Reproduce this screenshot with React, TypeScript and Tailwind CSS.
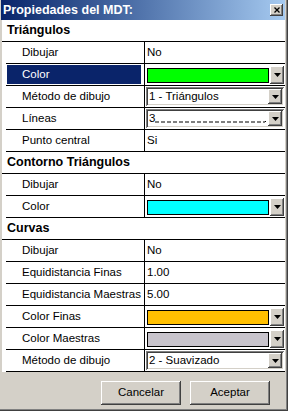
import React from "react";

type Row =
  | { kind: "header"; label: string }
  | { kind: "text"; label: string; value: string; selected?: boolean }
  | { kind: "color"; label: string; color: string; selected?: boolean }
  | { kind: "combo"; label: string; value: string }
  | { kind: "lines"; label: string };

const rows: Row[] = [
  { kind: "header", label: "Triángulos" },
  { kind: "text", label: "Dibujar", value: "No" },
  { kind: "color", label: "Color", color: "#00ff00", selected: true },
  { kind: "combo", label: "Método de dibujo", value: "1 - Triángulos" },
  { kind: "lines", label: "Líneas" },
  { kind: "text", label: "Punto central", value: "Si" },
  { kind: "header", label: "Contorno Triángulos" },
  { kind: "text", label: "Dibujar", value: "No" },
  { kind: "color", label: "Color", color: "#00ffff" },
  { kind: "header", label: "Curvas" },
  { kind: "text", label: "Dibujar", value: "No" },
  { kind: "text", label: "Equidistancia Finas", value: "1.00" },
  { kind: "text", label: "Equidistancia Maestras", value: "5.00" },
  { kind: "color", label: "Color Finas", color: "#ffbf00" },
  { kind: "color", label: "Color Maestras", color: "#c8c4cc" },
  { kind: "combo", label: "Método de dibujo", value: "2 - Suavizado" },
];

function Arrow() {
  return (
    <svg width="7" height="4" viewBox="0 0 7 4">
      <polygon points="0,0 7,0 3.5,4" fill="#000" />
    </svg>
  );
}

function DropButton() {
  return (
    <div className="flex h-full w-[14px] shrink-0 items-center justify-center bg-[#d4d0c8] shadow-[inset_-1px_-1px_0_#404040,inset_1px_1px_0_#ffffff,inset_-2px_-2px_0_#808080]">
      <Arrow />
    </div>
  );
}

function Value({ row }: { row: Row }) {
  if (row.kind === "text") {
    return <div className="flex h-full items-center pl-[2px]">{row.value}</div>;
  }
  if (row.kind === "color") {
    return (
      <div className="ml-px mr-px mt-[2px] flex h-[18px] items-center">
        <div className="flex h-full flex-1 items-center pl-[1px] pr-[1px]">
          <div className="h-[15px] w-full border border-black" style={{ backgroundColor: row.color }} />
        </div>
        <DropButton />
      </div>
    );
  }
  if (row.kind === "combo" || row.kind === "lines") {
    return (
      <div className="ml-px mr-px mt-[1px] flex h-[19px] items-center bg-white shadow-[inset_1px_1px_0_#808080,inset_-1px_-1px_0_#ffffff,inset_2px_2px_0_#404040,inset_-2px_-2px_0_#d4d0c8]">
        <div className="flex h-full flex-1 items-center pl-[3px]">
          {row.kind === "combo" ? (
            row.value
          ) : (
            <>
              <span>3</span>
              <svg className="mt-[7px]" width="112" height="2" viewBox="0 0 112 2">
                <line x1="0" y1="1" x2="110" y2="1" stroke="#000" strokeWidth="1" strokeDasharray="4 2" />
                <rect x="110" y="0" width="1" height="1" fill="#000" />
              </svg>
            </>
          )}
        </div>
        <div className="mr-[2px] h-[15px]">
          <DropButton />
        </div>
      </div>
    );
  }
  return null;
}

function GridRow({ row }: { row: Row }) {
  if (row.kind === "header") {
    return (
      <div className="flex h-[22px] items-center border-b border-black pl-[5px] text-[12.5px] font-bold">
        {row.label}
      </div>
    );
  }
  const selected = "selected" in row && row.selected;
  return (
    <div className="ml-[4px] flex h-[22px] border-b border-black">
      <div className="w-[139px] shrink-0 border-r border-black">
        {selected ? (
          <div className="ml-px mr-[3px] mt-px flex h-[19px] items-center bg-[#0a246a] pl-[15px] text-white">
            {row.label}
          </div>
        ) : (
          <div className="flex h-full items-center pl-[16px]">{row.label}</div>
        )}
      </div>
      <div className="flex-1">
        <Value row={row} />
      </div>
    </div>
  );
}

function PushButton({ label }: { label: string }) {
  return (
    <button className="flex h-[24px] w-[80px] items-center justify-center bg-[#d4d0c8] text-black shadow-[inset_-1px_-1px_0_#404040,inset_1px_1px_0_#ffffff,inset_-2px_-2px_0_#808080]">
      {label}
    </button>
  );
}

export default function App() {
  return (
    <div
      className="flex h-[411px] w-[288px] flex-col bg-[#404040] pb-px pr-px text-[11.5px] text-black"
      style={{ fontFamily: '"Liberation Sans", Arial, sans-serif' }}
    >
      <div className="flex flex-1 flex-col bg-[#808080] pb-px pr-px">
        <div className="flex flex-1 flex-col bg-[#d4d0c8] pb-px pl-px pr-px">
          {/* Title bar */}
          <div className="flex h-[20px] shrink-0 items-center bg-gradient-to-r from-[#0a246a] to-[#a6caf0] pl-[2px]">
            <span className="flex-1 text-[12.5px] font-bold text-white">Propiedades del MDT:</span>
            <div className="mr-[2px] flex h-[12px] w-[13px] items-center justify-center bg-[#d4d0c8] shadow-[inset_-1px_-1px_0_#404040,inset_1px_1px_0_#ffffff,inset_-2px_-2px_0_#808080]">
              <svg width="6" height="6" viewBox="0 0 6 6">
                <path d="M0.5 0.5 L5.5 5.5 M5.5 0.5 L0.5 5.5" stroke="#000" strokeWidth="1.3" />
              </svg>
            </div>
          </div>

          {/* Property grid */}
          <div className="ml-px flex shrink-0 flex-col bg-white">
            {rows.map((r, i) => (
              <GridRow key={i} row={r} />
            ))}
          </div>

          {/* Footer */}
          <div className="flex flex-1 items-start justify-end gap-[9px] pr-[15px] pt-[9px]">
            <PushButton label="Cancelar" />
            <PushButton label="Aceptar" />
          </div>
        </div>
      </div>
    </div>
  );
}
